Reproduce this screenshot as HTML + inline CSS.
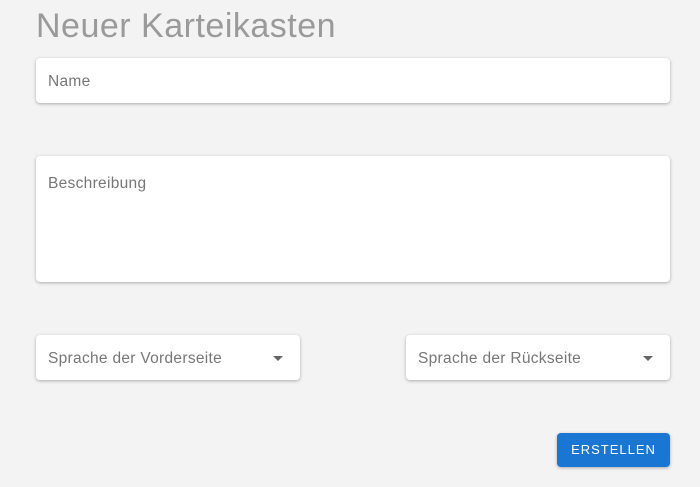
<!DOCTYPE html>
<html><head><style>
body{margin:0;width:700px;height:487px;background:#f3f3f3;font-family:"Liberation Sans",sans-serif;position:relative;overflow:hidden}
.t{position:absolute;left:36px;top:7px;font-size:34px;color:#9a9a9a;letter-spacing:0.5px}
.b{position:absolute;background:#fff;border-radius:4px;box-shadow:0 1px 3px rgba(0,0,0,.3);color:#777;font-size:15.5px;letter-spacing:0.3px;box-sizing:border-box;padding-left:12px}
.arr{position:absolute;right:17px;top:21px;width:0;height:0;border-left:5px solid transparent;border-right:5px solid transparent;border-top:5px solid #666}
.btn{position:absolute;left:557px;top:433px;width:113px;height:34px;background:#1976d2;border-radius:4px;color:#fff;font-size:13px;letter-spacing:1px;text-align:center;line-height:34px;box-shadow:0 1px 3px rgba(0,0,0,.3)}
</style></head><body>
<div class="t">Neuer Karteikasten</div>
<div class="b" style="left:36px;top:58px;width:634px;height:45px;line-height:47px">Name</div>
<div class="b" style="left:36px;top:156px;width:634px;height:126px;padding-top:19px">Beschreibung</div>
<div class="b" style="left:36px;top:335px;width:264px;height:45px;line-height:47px">Sprache der Vorderseite<div class="arr"></div></div>
<div class="b" style="left:406px;top:335px;width:264px;height:45px;line-height:47px">Sprache der Rückseite<div class="arr"></div></div>
<div class="btn">ERSTELLEN</div>
</body></html>
